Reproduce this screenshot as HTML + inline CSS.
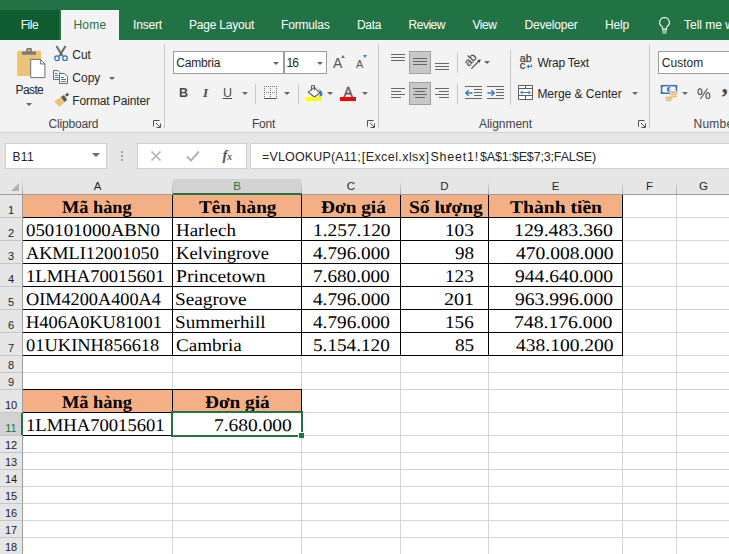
<!DOCTYPE html>
<html><head><meta charset="utf-8"><title>Excel</title>
<style>
*{box-sizing:border-box;margin:0;padding:0}
html,body{width:729px;height:554px;overflow:hidden;background:#fff}
body{position:relative;font-family:"Liberation Sans",sans-serif;font-size:12px;color:#262626}
.abs{position:absolute}
#top{left:0;top:0;width:729px;height:40px;background:#217346}
.tab{position:absolute;top:9.5px;height:30px;line-height:30px;color:#fff;font-size:12px;white-space:nowrap}
#ribbon{left:0;top:40px;width:729px;height:92px;background:#f3f3f3}
#fbar{left:0;top:132px;width:729px;height:63px;background:#e6e6e6;border-top:1px solid #d2d2d2}
.rt{position:absolute;white-space:nowrap;font-size:12px;color:#262626;line-height:14px}
.vsep{position:absolute;width:1px;background:#d0d0d0}
.ch{position:absolute;top:179px;height:15px;line-height:14px;text-align:center;font-size:11.5px;color:#262626}
.chs{position:absolute;top:180px;width:1px;height:14px;background:linear-gradient(#e6e6e6,#a8a8a8)}
.rh{position:absolute;left:0;width:22px;text-align:center;font-size:11px;color:#1c1c1c;background:#e6e6e6}
.hl{position:absolute;height:1px;background:#d4d4d4}
.vl{position:absolute;top:195px;width:1px;height:359px;background:#d4d4d4}
.fill{position:absolute;background:#f4b084}
.c{position:absolute;font-family:"Liberation Serif",serif;font-size:17.8px;line-height:20px;color:#000;white-space:nowrap;transform-origin:0 16.01px;text-rendering:geometricPrecision}
.c.b{font-weight:bold}
.bk{position:absolute;background:#000}
</style></head><body>

<div id="top" class="abs"></div>
<div class="abs" style="left:0;top:10px;width:59px;height:30px;background:#0f5c30"></div>
<div class="abs" style="left:61px;top:10px;width:58px;height:30px;background:#f3f3f3"></div>
<div class="tab" style="left:20.7px;color:#fff;letter-spacing:-0.436px">File</div>
<div class="tab" style="left:73.5px;color:#217346;letter-spacing:0.196px">Home</div>
<div class="tab" style="left:133px;color:#fff;letter-spacing:-0.169px">Insert</div>
<div class="tab" style="left:189px;color:#fff;letter-spacing:-0.217px">Page Layout</div>
<div class="tab" style="left:281px;color:#fff;letter-spacing:-0.189px">Formulas</div>
<div class="tab" style="left:357px;color:#fff;letter-spacing:-0.340px">Data</div>
<div class="tab" style="left:408.5px;color:#fff;letter-spacing:-0.477px">Review</div>
<div class="tab" style="left:472.5px;color:#fff;letter-spacing:-0.449px">View</div>
<div class="tab" style="left:524.5px;color:#fff;letter-spacing:-0.189px">Developer</div>
<div class="tab" style="left:605px;color:#fff;letter-spacing:-0.172px">Help</div>
<div class="tab" style="left:684px;color:#fff;letter-spacing:-0.002px">Tell me w</div>
<svg class="abs" style="left:655.8px;top:14.5px" width="17" height="21" viewBox="0 0 18 22"><path d="M9 2.5a5.2 5.2 0 0 0-3 9.4c.6.5.9 1.2.9 2v1h4.2v-1c0-.8.3-1.500.9-2a5.200 5.200 0 0 0-3-9.400z" fill="none" stroke="#fff" stroke-width="1.200"/><path d="M6.400 16.800h5.200M6.800 18.900h4.400" stroke="#fff" stroke-width="1.200"/></svg>
<div id="ribbon" class="abs"></div>
<div id="fbar" class="abs"></div>
<div class="vsep" style="left:164px;top:44px;height:84px;background:#c8c8c8"></div>
<div class="vsep" style="left:378px;top:44px;height:84px;background:#c8c8c8"></div>
<div class="vsep" style="left:649px;top:44px;height:84px;background:#c8c8c8"></div>
<svg class="abs" style="left:153px;top:120px" width="8" height="8" viewBox="0 0 8 8"><path d="M0.5 6.5V0.5H6.500M3 3l4 4M7.500 3.500v4H3.500" stroke="#505050" stroke-width="1" fill="none"/></svg>
<svg class="abs" style="left:367px;top:120px" width="8" height="8" viewBox="0 0 8 8"><path d="M0.5 6.5V0.5H6.500M3 3l4 4M7.500 3.500v4H3.500" stroke="#505050" stroke-width="1" fill="none"/></svg>
<svg class="abs" style="left:638px;top:120px" width="8" height="8" viewBox="0 0 8 8"><path d="M0.5 6.5V0.5H6.500M3 3l4 4M7.500 3.500v4H3.500" stroke="#505050" stroke-width="1" fill="none"/></svg>
<svg class="abs" style="left:16px;top:46px" width="30" height="33" viewBox="0 0 30 33">
<rect x="1.1" y="4.8" width="24" height="25.1" rx="1.5" fill="#ecc477"/>
<rect x="5.9" y="5.4" width="14.1" height="3.4" rx="0.6" fill="#7a7a7a"/><rect x="10.3" y="2" width="5.7" height="5" rx="1.2" fill="#7a7a7a"/><rect x="12" y="3.6" width="2.300" height="1.600" fill="#ecc477"/>
<path d="M14.700 13.400h9.700l4.500 4.500v13.700h-14.200z" fill="#fff" stroke="#6e6e6e" stroke-width="1"/><path d="M24.400 13.400v4.500h4.500" fill="none" stroke="#6e6e6e" stroke-width="1"/>
</svg>
<div class="abs" style="left:26px;top:103.2px;width:0;height:0;border-left:3px solid transparent;border-right:3px solid transparent;border-top:3.5px solid #666"></div>
<svg class="abs" style="left:53px;top:45px" width="16" height="17" viewBox="0 0 16 17">
<path d="M3.4 1l6.2 10M12.600 1L6.400 11" stroke="#666" stroke-width="1.900" fill="none"/>
<circle cx="4" cy="13.2" r="2.3" fill="none" stroke="#2b6cb8" stroke-width="1.2"/><circle cx="12" cy="13.2" r="2.3" fill="none" stroke="#2b6cb8" stroke-width="1.2"/>
</svg>
<svg class="abs" style="left:53px;top:70px" width="16" height="15" viewBox="0 0 16 15">
<path d="M0.500 0.500h4.500l2 2v7h-6.500z" fill="#fff" stroke="#6b6b6b"/><path d="M2 3.500h2.500M2 5.500h3.500M2 7.500h3.500" stroke="#3a7bc8" stroke-width="1"/>
<path d="M6.500 3.500h5l3 3v7h-8z" fill="#fff" stroke="#6b6b6b"/><path d="M8 7.500h3M8 9.500h5M8 11.500h5" stroke="#3a7bc8" stroke-width="1"/>
</svg>
<div class="abs" style="left:109.3px;top:76.5px;width:0;height:0;border-left:3px solid transparent;border-right:3px solid transparent;border-top:3.5px solid #666"></div>
<svg class="abs" style="left:53px;top:92px" width="17" height="16" viewBox="0 0 17 16">
<path d="M1 9.500l7-4.500 3.500 5.500-5 4.500z" fill="#ecc477"/><path d="M8 5l3-2 3.200 5-2.800 2z" fill="#5a5a5a"/><path d="M12 2.500l2.800-1.800 1.400 2.200-2.800 1.800z" fill="#5a5a5a"/>
</svg>
<div class="abs" style="left:173px;top:51px;width:111px;height:23px;background:#fff;border:1px solid #9c9c9c"></div>
<div class="abs" style="left:284px;top:51px;width:43px;height:23px;background:#fff;border:1px solid #9c9c9c"></div>
<div class="abs" style="left:273px;top:61.5px;width:0;height:0;border-left:3px solid transparent;border-right:3px solid transparent;border-top:3.5px solid #666"></div>
<div class="abs" style="left:316.5px;top:61.5px;width:0;height:0;border-left:3px solid transparent;border-right:3px solid transparent;border-top:3.5px solid #666"></div>
<div class="rt" style="left:333px;top:53.5px;font-size:14px;line-height:18px;color:#555">A</div>
<div class="abs" style="left:341px;top:55px;width:0;height:0;border-left:2.5px solid transparent;border-right:2.5px solid transparent;border-bottom:3px solid #3a7bc8"></div>
<div class="rt" style="left:356px;top:56px;font-size:11px;line-height:16px;color:#555">A</div>
<div class="abs" style="left:363px;top:55px;width:0;height:0;border-left:2.5px solid transparent;border-right:2.5px solid transparent;border-top:3px solid #3a7bc8"></div>
<div class="rt" style="left:179px;top:84.5px;font-size:12.5px;line-height:16px;font-weight:bold;color:#4a4a4a">B</div>
<div class="rt" style="left:203px;top:84.5px;font-size:13px;line-height:16px;font-style:italic;font-family:'Liberation Serif',serif;font-weight:bold;color:#4a4a4a">I</div>
<div class="rt" style="left:223px;top:84.5px;font-size:12.5px;line-height:16px;color:#4a4a4a">U</div>
<div class="abs" style="left:223px;top:98px;width:9px;height:1px;background:#4a4a4a"></div>
<div class="abs" style="left:241.5px;top:92.0px;width:0;height:0;border-left:3px solid transparent;border-right:3px solid transparent;border-top:3.5px solid #666"></div>
<div class="vsep" style="left:255px;top:84px;height:20px;background:#c8c8c8"></div>
<svg class="abs" style="left:264px;top:86px" width="13" height="13" viewBox="0 0 13 13" shape-rendering="crispEdges"><path d="M0 0.5h13M0 6.5h13M0.5 0v12M6.5 0v12M12.5 0v12" fill="none" stroke="#777" stroke-width="1" stroke-dasharray="1 1"/><path d="M0 12.5h13" stroke="#555" stroke-width="1"/></svg>
<div class="abs" style="left:284.4px;top:92.0px;width:0;height:0;border-left:3px solid transparent;border-right:3px solid transparent;border-top:3.5px solid #666"></div>
<div class="vsep" style="left:298px;top:84px;height:20px;background:#c8c8c8"></div>
<svg class="abs" style="left:305px;top:84px" width="19" height="18" viewBox="0 0 19 18">
<path d="M3.400 8.200L9.200 3.400l5.800 5.600-5.600 4z" fill="#fff" stroke="#5a5a5a" stroke-width="1.100"/><path d="M6.500 6.500V1.600h3v4.800" stroke="#5a5a5a" stroke-width="1" fill="none"/><path d="M13.800 5.200c2.600 1 4 3.200 3.700 5.400-.200 1.400-1.500 2.100-3.200 1.800 1.100-2.200.700-4.600-.5-7.200z" fill="#3c78c3"/>
<rect x="1" y="13" width="16" height="4" fill="#ffff00"/></svg>
<div class="abs" style="left:327.3px;top:92.0px;width:0;height:0;border-left:3px solid transparent;border-right:3px solid transparent;border-top:3.5px solid #666"></div>
<div class="rt" style="left:343.5px;top:84px;font-size:14px;line-height:16px;color:#555;-webkit-text-stroke:0.35px #555">A</div>
<div class="abs" style="left:340px;top:97px;width:16px;height:4px;background:#ff0000"></div>
<div class="abs" style="left:361.6px;top:92.0px;width:0;height:0;border-left:3px solid transparent;border-right:3px solid transparent;border-top:3.5px solid #666"></div>
<div class="abs" style="left:409px;top:51px;width:22px;height:23px;background:#c8c8c8;border:1px solid #9e9e9e"></div>
<div class="abs" style="left:409px;top:82px;width:22px;height:23px;background:#c8c8c8;border:1px solid #9e9e9e"></div>
<div class="abs" style="left:391px;top:54px;width:14px;height:1px;background:#666"></div>
<div class="abs" style="left:391px;top:57px;width:14px;height:1px;background:#666"></div>
<div class="abs" style="left:391px;top:60px;width:14px;height:1px;background:#666"></div>
<div class="abs" style="left:413px;top:58px;width:14px;height:1px;background:#666"></div>
<div class="abs" style="left:413px;top:61px;width:14px;height:1px;background:#666"></div>
<div class="abs" style="left:413px;top:64px;width:14px;height:1px;background:#666"></div>
<div class="abs" style="left:435px;top:63px;width:14px;height:1px;background:#666"></div>
<div class="abs" style="left:435px;top:66px;width:14px;height:1px;background:#666"></div>
<div class="abs" style="left:435px;top:69px;width:14px;height:1px;background:#666"></div>
<div class="abs" style="left:391px;top:88px;width:14px;height:1px;background:#666"></div>
<div class="abs" style="left:391px;top:91px;width:10px;height:1px;background:#666"></div>
<div class="abs" style="left:391px;top:94px;width:14px;height:1px;background:#666"></div>
<div class="abs" style="left:391px;top:97px;width:10px;height:1px;background:#666"></div>
<div class="abs" style="left:413.0px;top:88px;width:14px;height:1px;background:#666"></div>
<div class="abs" style="left:415.0px;top:91px;width:10px;height:1px;background:#666"></div>
<div class="abs" style="left:413.0px;top:94px;width:14px;height:1px;background:#666"></div>
<div class="abs" style="left:415.0px;top:97px;width:10px;height:1px;background:#666"></div>
<div class="abs" style="left:435px;top:88px;width:14px;height:1px;background:#666"></div>
<div class="abs" style="left:439px;top:91px;width:10px;height:1px;background:#666"></div>
<div class="abs" style="left:435px;top:94px;width:14px;height:1px;background:#666"></div>
<div class="abs" style="left:439px;top:97px;width:10px;height:1px;background:#666"></div>
<div class="vsep" style="left:457px;top:52px;height:21px;background:#c8c8c8"></div>
<div class="vsep" style="left:457px;top:83px;height:21px;background:#c8c8c8"></div>
<svg class="abs" style="left:463px;top:51px" width="21" height="21" viewBox="0 0 21 21"><text x="0" y="0" transform="translate(5.7 15.9) rotate(-48)" font-family="Liberation Sans,sans-serif" font-size="11.5" fill="#4a4a4a" stroke="#4a4a4a" stroke-width="0.2">ab</text><path d="M8.400 17.600L16.600 9.400" stroke="#4a4a4a" stroke-width="1.200" fill="none"/><path d="M17.800 8.200l-3.700 1.100 2.600 2.600z" fill="#4a4a4a"/></svg>
<div class="abs" style="left:484.4px;top:60.8px;width:0;height:0;border-left:3px solid transparent;border-right:3px solid transparent;border-top:3.5px solid #666"></div>
<div class="abs" style="left:474.0px;top:89px;width:7.5px;height:1px;background:#666"></div>
<div class="abs" style="left:474.0px;top:92px;width:7.5px;height:1px;background:#666"></div>
<div class="abs" style="left:474.0px;top:95px;width:7.5px;height:1px;background:#666"></div>
<div class="abs" style="left:464.5px;top:86px;width:17px;height:1px;background:#666"></div>
<div class="abs" style="left:464.5px;top:98px;width:17px;height:1px;background:#666"></div>
<svg class="abs" style="left:464.5px;top:88.5px" width="8" height="8" viewBox="0 0 8 8"><path d="M7.5 4H1M3.6 1.200L0.800 4l2.800 2.800" stroke="#3a7bc8" stroke-width="1.500" fill="none"/></svg>
<div class="abs" style="left:496.0px;top:89px;width:7.5px;height:1px;background:#666"></div>
<div class="abs" style="left:496.0px;top:92px;width:7.5px;height:1px;background:#666"></div>
<div class="abs" style="left:496.0px;top:95px;width:7.5px;height:1px;background:#666"></div>
<div class="abs" style="left:486.5px;top:86px;width:17px;height:1px;background:#666"></div>
<div class="abs" style="left:486.5px;top:98px;width:17px;height:1px;background:#666"></div>
<svg class="abs" style="left:486.5px;top:88.5px" width="8" height="8" viewBox="0 0 8 8"><path d="M0.500 4H7M4.400 1.200L7.200 4 4.400 6.800" stroke="#3a7bc8" stroke-width="1.500" fill="none"/></svg>
<div class="vsep" style="left:510px;top:50px;height:55px;background:#c8c8c8"></div>
<svg class="abs" style="left:518px;top:52px" width="16" height="19" viewBox="0 0 16 19"><text x="1.7" y="9.9" font-family="Liberation Sans,sans-serif" font-size="10.8" fill="#3c3c3c" stroke="#3c3c3c" stroke-width="0.25">ab</text><text x="1.7" y="17" font-family="Liberation Sans,sans-serif" font-size="10.8" fill="#3c3c3c" stroke="#3c3c3c" stroke-width="0.25">c</text><path d="M13.500 12.500v2H9.500M11 13l-1.600 1.500 1.600 1.500" stroke="#3c78c3" stroke-width="1.100" fill="none"/></svg>
<svg class="abs" style="left:518px;top:85px" width="15" height="15" viewBox="0 0 15 15"><path d="M0.500 0.500h14v14h-14zM0.500 3.500h14M0.500 10.500h14M7.500 0.500v3M7.500 10.500v4" fill="#fff" stroke="#5e5e5e" stroke-width="1"/><path d="M3 7.500h9" stroke="#3c78c3" stroke-width="1" fill="none"/><path d="M2 7.500l2.500-2v4zM13 7.500l-2.500-2v4z" fill="#3c78c3"/></svg>
<div class="abs" style="left:631.6px;top:92.0px;width:0;height:0;border-left:3px solid transparent;border-right:3px solid transparent;border-top:3.5px solid #666"></div>
<div class="abs" style="left:658px;top:51px;width:80px;height:23px;background:#fff;border:1px solid #9c9c9c"></div>
<svg class="abs" style="left:660px;top:84px" width="18" height="18" viewBox="0 0 18 18"><rect x="1.6" y="1.7" width="14.8" height="7.5" fill="#fff" stroke="#3c78c3" stroke-width="1.6"/><path d="M0.8 0.9h3v1.5h-1.5v1.5h-1.5zM17.2 0.9h-3v1.5h1.5v1.5h1.5zM0.8 10h3v-1.5h-1.5v-1.5h-1.5z" fill="#3c78c3"/><circle cx="9" cy="5.4" r="2.3" fill="#3c78c3"/><path d="M9.3 4.200h2v2.400h-2z" fill="#fff"/>
<g fill="#e8b96a" stroke="#f3f3f3" stroke-width="0.6"><ellipse cx="13.5" cy="12.2" rx="3.6" ry="1.5"/><ellipse cx="13.5" cy="10.2" rx="3.6" ry="1.5"/><ellipse cx="13.5" cy="8.2" rx="3.6" ry="1.5"/><ellipse cx="8.6" cy="15.8" rx="3.6" ry="1.5"/><ellipse cx="8.6" cy="13.8" rx="3.6" ry="1.5"/></g></svg>
<div class="abs" style="left:682.4px;top:92.0px;width:0;height:0;border-left:3px solid transparent;border-right:3px solid transparent;border-top:3.5px solid #666"></div>
<div class="rt" style="left:697px;top:85.8px;font-size:15.4px;line-height:18px;text-rendering:geometricPrecision;color:#4a4a4a">%</div>
<div class="rt" style="left:721.5px;top:72px;font-size:26px;line-height:26px;font-weight:bold;font-family:'Liberation Serif',serif;color:#4a4a4a">,</div>
<div class="rt" style="left:15.5px;top:82.5px;font-size:12px;letter-spacing:-0.598px;color:#262626;">Paste</div>
<div class="rt" style="left:72.3px;top:48.3px;font-size:12px;letter-spacing:-0.062px;color:#262626;">Cut</div>
<div class="rt" style="left:72.3px;top:71.3px;font-size:12px;letter-spacing:-0.004px;color:#262626;">Copy</div>
<div class="rt" style="left:72.3px;top:94.0px;font-size:12px;letter-spacing:-0.119px;color:#262626;">Format Painter</div>
<div class="rt" style="left:48.4px;top:117.0px;font-size:12px;letter-spacing:-0.153px;color:#444;">Clipboard</div>
<div class="rt" style="left:176.3px;top:55.5px;font-size:12px;letter-spacing:-0.194px;color:#262626;">Cambria</div>
<div class="rt" style="left:286.5px;top:55.5px;font-size:12px;letter-spacing:-0.930px;color:#262626;">16</div>
<div class="rt" style="left:252px;top:117.0px;font-size:12px;letter-spacing:-0.254px;color:#444;">Font</div>
<div class="rt" style="left:537.4px;top:56.1px;font-size:12px;letter-spacing:-0.242px;color:#262626;">Wrap Text</div>
<div class="rt" style="left:537.4px;top:87.2px;font-size:12px;letter-spacing:-0.029px;color:#262626;">Merge &amp; Center</div>
<div class="rt" style="left:479px;top:117.0px;font-size:12px;letter-spacing:-0.042px;color:#444;">Alignment</div>
<div class="rt" style="left:661.8px;top:56.0px;font-size:12px;letter-spacing:0.026px;color:#262626;">Custom</div>
<div class="rt" style="left:693.5px;top:117.0px;font-size:12px;letter-spacing:0.219px;color:#444;">Number</div>
<div class="abs" style="left:5px;top:143px;width:102px;height:26px;background:#fff;border:1px solid #cfcfcf"></div>
<div class="abs" style="left:92.4px;top:153px;width:0;height:0;border-left:4.2px solid transparent;border-right:4.2px solid transparent;border-top:4.6px solid #6a6a6a"></div>
<div class="abs" style="left:121px;top:151px;width:2px;height:2px;background:#a6a6a6;box-shadow:0 4px 0 #a6a6a6,0 8px 0 #a6a6a6"></div>
<div class="abs" style="left:137px;top:143px;width:110px;height:26px;background:#fff;border:1px solid #cfcfcf"></div>
<svg class="abs" style="left:149px;top:149px" width="14" height="14" viewBox="0 0 14 14"><path d="M2.5 2.5l9 9M11.5 2.500l-9 9" stroke="#b2b2b2" stroke-width="1.600" fill="none"/></svg>
<svg class="abs" style="left:184.5px;top:148.7px" width="16" height="14" viewBox="0 0 16 14"><path d="M2 7.500l4 4L14 2.500" stroke="#b2b2b2" stroke-width="1.900" fill="none"/></svg>
<div class="abs" style="left:222.5px;top:146.3px;font-family:'Liberation Serif',serif;font-style:italic;font-weight:bold;font-size:14.5px;color:#555;line-height:18px">f<span style="font-size:9.5px">x</span></div>
<div class="abs" style="left:250px;top:143px;width:479px;height:26px;background:#fff;border:1px solid #cfcfcf;border-right:0"></div>
<div class="rt" style="left:12.5px;top:149.5px;font-size:12px;letter-spacing:0.344px">B11</div>
<div class="rt" style="left:262px;top:149.5px;font-size:12.5px;letter-spacing:0.162px">=VLOOKUP(A11;</div>
<div class="rt" style="left:361.8px;top:149.5px;font-size:12.5px;letter-spacing:0.415px">[Excel.xlsx]</div>
<div class="rt" style="left:430.5px;top:149.5px;font-size:12.5px;letter-spacing:0.772px">Sheet1!</div>
<div class="rt" style="left:480px;top:149.5px;font-size:12.5px;letter-spacing:-0.158px">$A$1:$E$7;3;FALSE)</div>
<div class="abs" style="left:11px;top:183px;width:0;height:0;border-left:8px solid transparent;border-bottom:8px solid #b1b1b1"></div>
<div class="abs" style="left:173px;top:179px;width:128px;height:14px;background:#d2d2d2"></div>
<div class="ch" style="left:23px;width:149px">A</div>
<div class="ch" style="left:173px;width:128px;color:#217346">B</div>
<div class="ch" style="left:302px;width:98px">C</div>
<div class="ch" style="left:401px;width:87px">D</div>
<div class="ch" style="left:489px;width:133px">E</div>
<div class="ch" style="left:623px;width:53px">F</div>
<div class="ch" style="left:677px;width:53px">G</div>
<div class="chs" style="left:22px"></div>
<div class="chs" style="left:172px"></div>
<div class="chs" style="left:301px"></div>
<div class="chs" style="left:400px"></div>
<div class="chs" style="left:488px"></div>
<div class="chs" style="left:622px"></div>
<div class="chs" style="left:676px"></div>
<div class="abs" style="left:0;top:194px;width:729px;height:1px;background:#9c9c9c"></div>
<div class="abs" style="left:173px;top:193px;width:129px;height:2px;background:#217346"></div>
<div class="abs" style="left:0;top:195px;width:22px;height:359px;background:#e6e6e6"></div>
<div class="abs" style="left:0;top:413px;width:22px;height:22px;background:#d2d2d2"></div>
<div class="rh" style="top:204.2px;height:13px;line-height:13px;background:none">1</div>
<div class="hl" style="left:0;top:217px;width:22px;background:#c6c6c6"></div>
<div class="rh" style="top:227.2px;height:13px;line-height:13px;background:none">2</div>
<div class="hl" style="left:0;top:240px;width:22px;background:#c6c6c6"></div>
<div class="rh" style="top:250.2px;height:13px;line-height:13px;background:none">3</div>
<div class="hl" style="left:0;top:263px;width:22px;background:#c6c6c6"></div>
<div class="rh" style="top:273.2px;height:13px;line-height:13px;background:none">4</div>
<div class="hl" style="left:0;top:286px;width:22px;background:#c6c6c6"></div>
<div class="rh" style="top:296.2px;height:13px;line-height:13px;background:none">5</div>
<div class="hl" style="left:0;top:309px;width:22px;background:#c6c6c6"></div>
<div class="rh" style="top:319.2px;height:13px;line-height:13px;background:none">6</div>
<div class="hl" style="left:0;top:332px;width:22px;background:#c6c6c6"></div>
<div class="rh" style="top:342.2px;height:13px;line-height:13px;background:none">7</div>
<div class="hl" style="left:0;top:355px;width:22px;background:#c6c6c6"></div>
<div class="rh" style="top:359.2px;height:13px;line-height:13px;background:none">8</div>
<div class="hl" style="left:0;top:372px;width:22px;background:#c6c6c6"></div>
<div class="rh" style="top:376.2px;height:13px;line-height:13px;background:none">9</div>
<div class="hl" style="left:0;top:389px;width:22px;background:#c6c6c6"></div>
<div class="rh" style="top:399.2px;height:13px;line-height:13px;background:none">10</div>
<div class="hl" style="left:0;top:412px;width:22px;background:#c6c6c6"></div>
<div class="rh" style="top:422.2px;height:13px;line-height:13px;background:none;color:#217346">11</div>
<div class="hl" style="left:0;top:435px;width:22px;background:#c6c6c6"></div>
<div class="rh" style="top:439.2px;height:13px;line-height:13px;background:none">12</div>
<div class="hl" style="left:0;top:452px;width:22px;background:#c6c6c6"></div>
<div class="rh" style="top:456.2px;height:13px;line-height:13px;background:none">13</div>
<div class="hl" style="left:0;top:469px;width:22px;background:#c6c6c6"></div>
<div class="rh" style="top:473.2px;height:13px;line-height:13px;background:none">14</div>
<div class="hl" style="left:0;top:486px;width:22px;background:#c6c6c6"></div>
<div class="rh" style="top:490.2px;height:13px;line-height:13px;background:none">15</div>
<div class="hl" style="left:0;top:503px;width:22px;background:#c6c6c6"></div>
<div class="rh" style="top:507.2px;height:13px;line-height:13px;background:none">16</div>
<div class="hl" style="left:0;top:520px;width:22px;background:#c6c6c6"></div>
<div class="rh" style="top:524.2px;height:13px;line-height:13px;background:none">17</div>
<div class="hl" style="left:0;top:537px;width:22px;background:#c6c6c6"></div>
<div class="rh" style="top:541.2px;height:13px;line-height:13px;background:none">18</div>
<div class="hl" style="left:0;top:554px;width:22px;background:#c6c6c6"></div>
<div class="abs" style="left:22px;top:195px;width:1px;height:359px;background:#9c9c9c"></div>
<div class="abs" style="left:21px;top:413px;width:2px;height:22px;background:#217346"></div>
<div class="hl" style="left:23px;top:217px;width:706px"></div>
<div class="hl" style="left:23px;top:240px;width:706px"></div>
<div class="hl" style="left:23px;top:263px;width:706px"></div>
<div class="hl" style="left:23px;top:286px;width:706px"></div>
<div class="hl" style="left:23px;top:309px;width:706px"></div>
<div class="hl" style="left:23px;top:332px;width:706px"></div>
<div class="hl" style="left:23px;top:355px;width:706px"></div>
<div class="hl" style="left:23px;top:372px;width:706px"></div>
<div class="hl" style="left:23px;top:389px;width:706px"></div>
<div class="hl" style="left:23px;top:412px;width:706px"></div>
<div class="hl" style="left:23px;top:435px;width:706px"></div>
<div class="hl" style="left:23px;top:452px;width:706px"></div>
<div class="hl" style="left:23px;top:469px;width:706px"></div>
<div class="hl" style="left:23px;top:486px;width:706px"></div>
<div class="hl" style="left:23px;top:503px;width:706px"></div>
<div class="hl" style="left:23px;top:520px;width:706px"></div>
<div class="hl" style="left:23px;top:537px;width:706px"></div>
<div class="hl" style="left:23px;top:554px;width:706px"></div>
<div class="vl" style="left:172px"></div>
<div class="vl" style="left:301px"></div>
<div class="vl" style="left:400px"></div>
<div class="vl" style="left:488px"></div>
<div class="vl" style="left:622px"></div>
<div class="vl" style="left:676px"></div>
<div class="fill" style="left:23px;top:195px;width:599px;height:22px"></div>
<div class="fill" style="left:23px;top:390px;width:278px;height:22px"></div>
<div class="bk" style="left:23px;top:217px;width:600px;height:1px"></div>
<div class="bk" style="left:23px;top:240px;width:600px;height:1px"></div>
<div class="bk" style="left:23px;top:263px;width:600px;height:1px"></div>
<div class="bk" style="left:23px;top:286px;width:600px;height:1px"></div>
<div class="bk" style="left:23px;top:309px;width:600px;height:1px"></div>
<div class="bk" style="left:23px;top:332px;width:600px;height:1px"></div>
<div class="bk" style="left:23px;top:355px;width:600px;height:1px"></div>
<div class="bk" style="left:172px;top:195px;width:1px;height:161px"></div>
<div class="bk" style="left:301px;top:195px;width:1px;height:161px"></div>
<div class="bk" style="left:400px;top:195px;width:1px;height:161px"></div>
<div class="bk" style="left:488px;top:195px;width:1px;height:161px"></div>
<div class="bk" style="left:622px;top:195px;width:1px;height:161px"></div>
<div class="bk" style="left:23px;top:389px;width:279px;height:1px"></div>
<div class="bk" style="left:23px;top:412px;width:279px;height:1px"></div>
<div class="bk" style="left:23px;top:435px;width:279px;height:1px"></div>
<div class="bk" style="left:172px;top:389px;width:1px;height:47px"></div>
<div class="bk" style="left:301px;top:389px;width:1px;height:47px"></div>
<div class="c b" style="left:62.0px;top:197.4px;transform:scale(1.0289,1)">Mã hàng</div>
<div class="c b" style="left:198.5px;top:197.4px;transform:scale(1.0812,1)">Tên hàng</div>
<div class="c b" style="left:320.5px;top:197.4px;transform:scale(1.0860,1)">Đơn giá</div>
<div class="c b" style="left:409.3px;top:197.4px;transform:scale(1.0946,1)">Số lượng</div>
<div class="c b" style="left:509.8px;top:197.4px;transform:scale(1.1014,1)">Thành tiền</div>
<div class="c" style="left:26.0px;top:220.4px;transform:scale(1.0586,1)">050101000ABN0</div>
<div class="c" style="left:25.8px;top:243.4px;transform:scale(1.0263,1)">AKMLI12001050</div>
<div class="c" style="left:25.5px;top:266.4px;transform:scale(1.0477,1)">1LMHA70015601</div>
<div class="c" style="left:26.0px;top:289.4px;transform:scale(1.0265,1)">OIM4200A400A4</div>
<div class="c" style="left:25.9px;top:312.4px;transform:scale(1.0340,1)">H406A0KU81001</div>
<div class="c" style="left:26.1px;top:335.4px;transform:scale(1.0383,1)">01UKINH856618</div>
<div class="c" style="left:175.9px;top:220.4px;transform:scale(1.0636,1)">Harlech</div>
<div class="c" style="left:175.9px;top:243.4px;transform:scale(1.0475,1)">Kelvingrove</div>
<div class="c" style="left:175.8px;top:266.4px;transform:scale(1.1047,1)">Princetown</div>
<div class="c" style="left:175.1px;top:289.4px;transform:scale(1.0832,1)">Seagrove</div>
<div class="c" style="left:175.1px;top:312.4px;transform:scale(1.0784,1)">Summerhill</div>
<div class="c" style="left:175.9px;top:335.4px;transform:scale(1.0731,1)">Cambria</div>
<div class="c" style="left:312.9px;top:220.4px;transform:scale(1.0897,1)">1.257.120</div>
<div class="c" style="left:313.1px;top:243.4px;transform:scale(1.0815,1)">4.796.000</div>
<div class="c" style="left:313.2px;top:266.4px;transform:scale(1.0781,1)">7.680.000</div>
<div class="c" style="left:313.1px;top:289.4px;transform:scale(1.0815,1)">4.796.000</div>
<div class="c" style="left:313.1px;top:312.4px;transform:scale(1.0815,1)">4.796.000</div>
<div class="c" style="left:313.0px;top:335.4px;transform:scale(1.0800,1)">5.154.120</div>
<div class="c" style="left:444.5px;top:220.4px;transform:scale(1.0807,1)">103</div>
<div class="c" style="left:454.6px;top:243.4px;transform:scale(1.0719,1)">98</div>
<div class="c" style="left:444.5px;top:266.4px;transform:scale(1.0807,1)">123</div>
<div class="c" style="left:443.8px;top:289.4px;transform:scale(1.1257,1)">201</div>
<div class="c" style="left:444.6px;top:312.4px;transform:scale(1.0799,1)">156</div>
<div class="c" style="left:454.5px;top:335.4px;transform:scale(1.0798,1)">85</div>
<div class="c" style="left:514.1px;top:220.4px;transform:scale(1.1119,1)">129.483.360</div>
<div class="c" style="left:515.8px;top:243.4px;transform:scale(1.0975,1)">470.008.000</div>
<div class="c" style="left:515.3px;top:266.4px;transform:scale(1.1024,1)">944.640.000</div>
<div class="c" style="left:515.3px;top:289.4px;transform:scale(1.1024,1)">963.996.000</div>
<div class="c" style="left:514.3px;top:312.4px;transform:scale(1.1065,1)">748.176.000</div>
<div class="c" style="left:515.8px;top:335.4px;transform:scale(1.0975,1)">438.100.200</div>
<div class="c b" style="left:62.3px;top:392.4px;transform:scale(1.0328,1)">Mã hàng</div>
<div class="c b" style="left:205.0px;top:392.4px;transform:scale(1.0826,1)">Đơn giá</div>
<div class="c" style="left:25.5px;top:415.4px;transform:scale(1.0477,1)">1LMHA70015601</div>
<div class="c" style="left:214.4px;top:415.4px;transform:scale(1.0939,1)">7.680.000</div>
<div class="abs" style="left:171px;top:411px;width:132px;height:26px;border:2px solid #217346"></div>
<div class="abs" style="left:298px;top:432px;width:6px;height:6px;background:#217346;border-left:1px solid #fff;border-top:1px solid #fff"></div>
</body></html>
